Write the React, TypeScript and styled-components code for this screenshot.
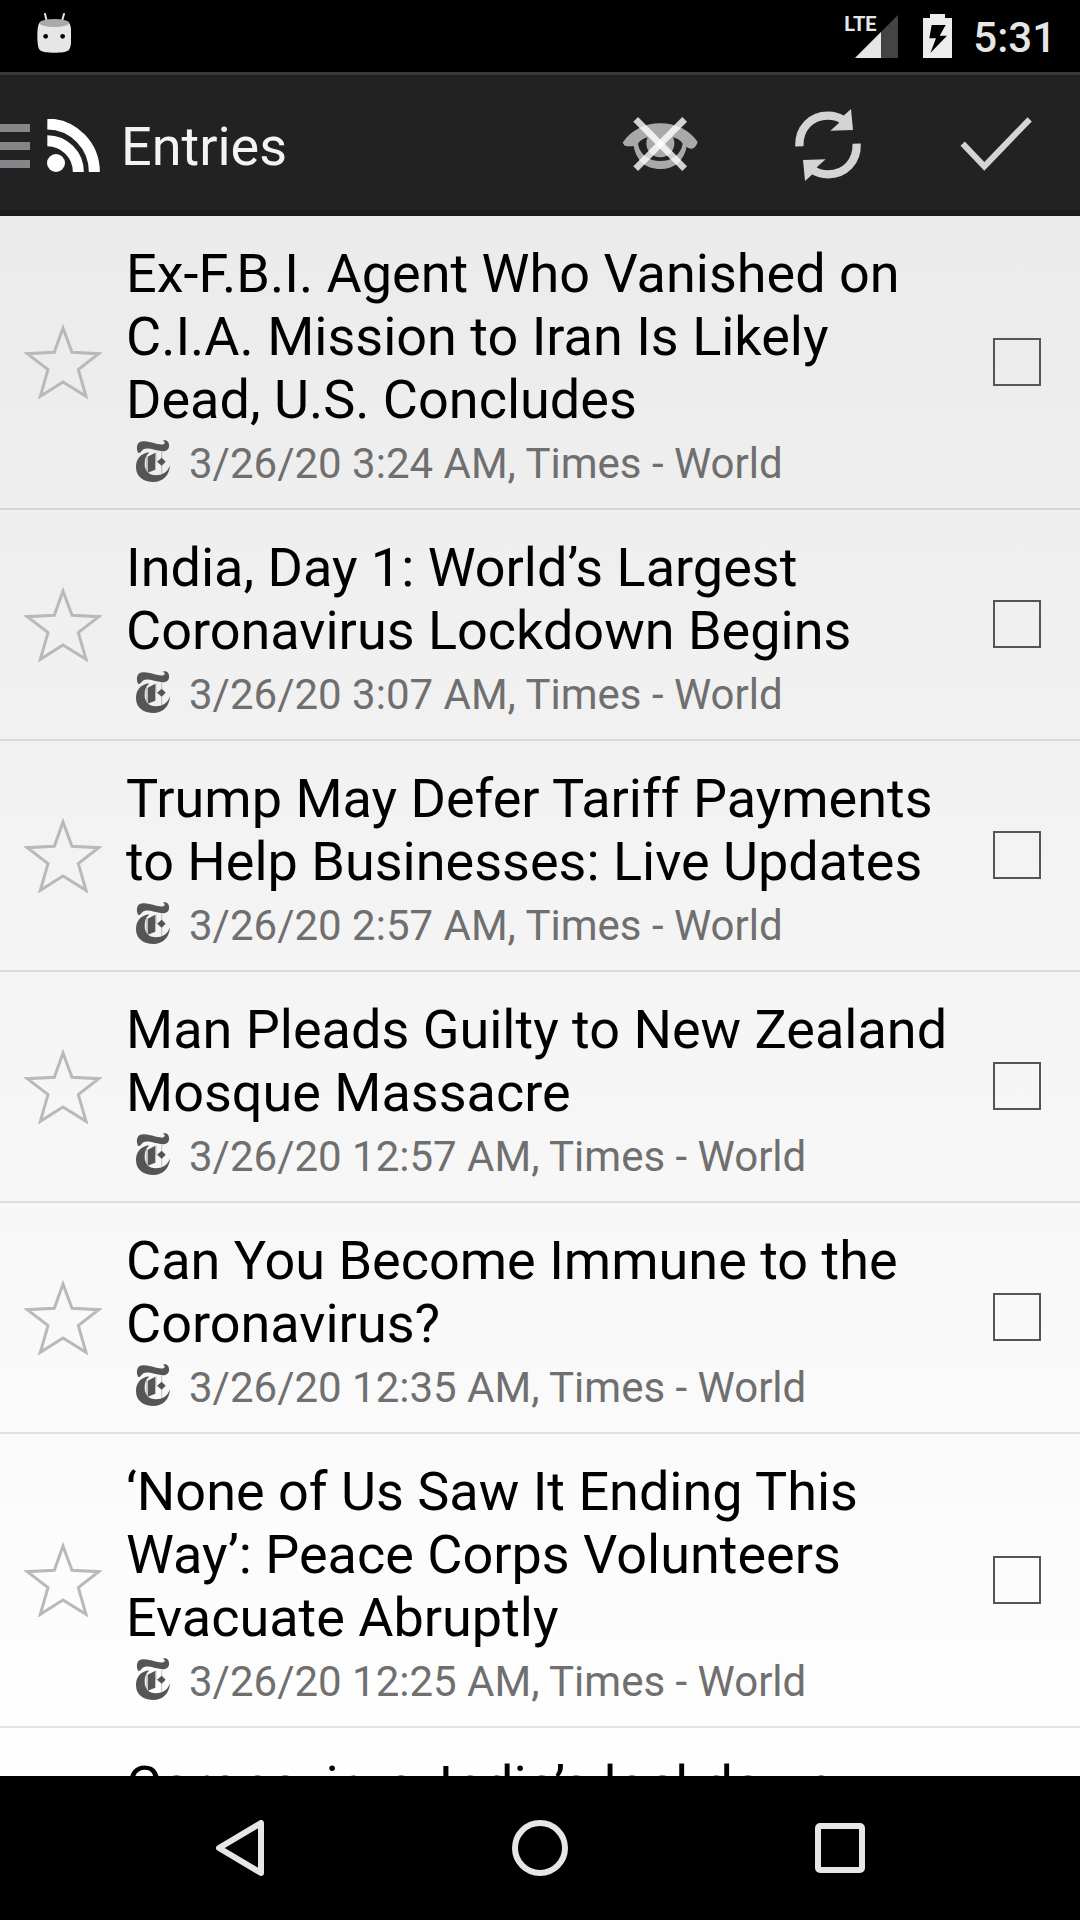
import React from "react";
import styled, { createGlobalStyle } from "styled-components";

const GlobalStyle = createGlobalStyle`
  *, *::before, *::after { box-sizing: border-box; }
  body { margin: 0; background: #000; }
  h1, h2, p, ul { margin: 0; padding: 0; font-weight: 400; }
  button { margin: 0; padding: 0; border: 0; background: none; cursor: pointer; }
  svg { display: block; }
`;

const Screen = styled.div`
  display: flex;
  flex-direction: column;
  height: 100vh;
  overflow: hidden;
  font-family: Roboto, "Noto Sans", sans-serif;
  color: #000;
  background: linear-gradient(#e8e8e8, #ffffff 94%);
`;

const StatusBar = styled.div`
  display: flex;
  flex: none;
  align-items: center;
  justify-content: space-between;
  height: 72px;
  padding: 0 24px 0 37px;
  color: #e6e6e6;
  background: #000;
`;

const StatusIcons = styled.div`
  display: flex;
  align-items: center;
  gap: 25px;
`;

const Signal = styled.div`
  position: relative;
  padding-left: 10px;
`;

const NetworkType = styled.span`
  position: absolute;
  top: -3px;
  left: -1px;
  font-size: 20px;
  font-weight: 700;
  line-height: 24px;
`;

const Clock = styled.time`
  margin-left: -4px;
  padding-top: 3px;
  font-size: 42px;
  font-weight: 500;
  line-height: 48px;
`;

const ActionBar = styled.header`
  display: flex;
  flex: none;
  align-items: center;
  height: 144px;
  background: #222;
  box-shadow: inset 0 3px #3a3a3a, inset 0 -6px #1a1a1a;
`;

const HomeButton = styled.button`
  display: flex;
  flex: none;
  align-items: center;
  gap: 17px;
  padding-top: 3px;
`;

const Title = styled.h1`
  flex: 1;
  padding: 5px 0 0 21px;
  font-size: 54px;
  line-height: 64px;
  color: #f3f3f3;
`;

const ActionButton = styled.button`
  display: flex;
  flex: none;
  align-items: center;
  justify-content: center;
  width: 168px;
  height: 100%;
`;

const EntryList = styled.ul`
  flex: 1;
  min-height: 0;
  overflow: hidden;
  list-style: none;
`;

const EntryRow = styled.li`
  display: grid;
  grid-template-columns: 126px 1fr 126px;
  align-items: center;
  border-bottom: 2px solid rgba(0, 0, 0, 0.1);
`;

const StarButton = styled.button`
  display: flex;
  justify-content: center;
  padding-bottom: 1px;
`;

const EntryText = styled.div`
  padding: 26px 0 20px;
`;

const Headline = styled.h2`
  font-size: 54px;
  line-height: 63px;
`;

const Meta = styled.p`
  display: flex;
  align-items: center;
  gap: 19px;
  padding: 8px 0 0 10px;
  font-size: 42px;
  line-height: 49px;
  color: #6f6f6f;
`;

const FeedBadge = styled.span`
  flex: none;
  padding-bottom: 5px;
`;

const ReadBox = styled.input`
  appearance: none;
  justify-self: center;
  width: 48px;
  height: 48px;
  margin: 0 0 1px;
  border: 2px solid #555;

  &:checked { background: #555; }
`;

const NavBar = styled.nav`
  display: flex;
  flex: none;
  height: 144px;
  padding: 0 90px;
  background: #000;
`;

const NavButton = styled.button`
  display: flex;
  flex: 1;
  align-items: center;
  justify-content: center;
`;

const AndroidIcon = () => (
  <svg width="34" height="46" viewBox="110 38 102 138" aria-hidden="true">
    <path d="M134 41L140 66M191 41L184 66" stroke="#e6e6e6" strokeWidth="6" strokeLinecap="round" />
    <path d="M117 68C112 76 111 90 111 108C111 128 113 144 119 150C128 160 196 160 205 150C211 144 213 128 213 108C213 90 212 76 207 68Z" fill="#e6e6e6" />
    <ellipse cx="162" cy="68" rx="45" ry="12" fill="#aaa" />
    <circle cx="136" cy="108" r="7" fill="#000" />
    <circle cx="187" cy="108" r="7" fill="#000" />
  </svg>
);

const SignalIcon = () => (
  <svg width="43" height="43" viewBox="0 0 43 43" aria-hidden="true">
    <path d="M0 43L43 0V43Z" fill="#444" />
    <path d="M0 43L26 17V43Z" fill="#e6e6e6" />
  </svg>
);

const BatteryIcon = () => (
  <svg width="29" height="44" viewBox="969 42 87 132" aria-hidden="true">
    <path fillRule="evenodd" fill="#ececec" d="M969 54H990V42H1035V54H1056V174H969ZM995 75L988 115H1008L991 159L1041 107H1019L1037 75Z" />
  </svg>
);

const DrawerIcon = () => (
  <svg width="30" height="44" viewBox="0 0 30 44" aria-hidden="true">
    <path d="M0 0H30V8H0ZM0 18H30V26H0ZM0 36H30V44H0Z" fill="#85868a" />
  </svg>
);

const FeedIcon = () => (
  <svg width="53" height="54" viewBox="141 354 159 162" aria-hidden="true">
    <circle cx="168" cy="486" r="27" fill="#fff" />
    <path d="M142 369A142 144 0 0 1 283 513M142 419A93 94 0 0 1 235 513" fill="none" stroke="#fff" strokeWidth="33" />
  </svg>
);

const HideReadIcon = () => (
  <svg width="76" height="56" viewBox="66 348 228 168" aria-hidden="true">
    <path
      fill="#a9a9a9"
      fillRule="evenodd"
      d="M68 428C92 392 132 370 181 370C230 370 270 392 293 426C290 436 283 446 275 446Q265 446 260 440C252 480 226 507 181 507C136 507 108 480 101 438Q90 440 74 437ZM114 432C120 465 147 483 181 483C215 483 242 465 248 432C242 420 230 413 212 412H150C133 413 120 420 114 432Z"
    />
    <circle cx="181" cy="430" r="42" fill="#a9a9a9" />
    <path d="M107 358L254 506" stroke="#fff" strokeOpacity="0.8" strokeWidth="20" />
    <path d="M254 358L107 506" stroke="#fff" strokeOpacity="0.8" strokeWidth="20" />
  </svg>
);

const RefreshIcon = () => (
  <svg width="68" height="76" viewBox="583 319 204 228" aria-hidden="true">
    <g id="half">
      <path d="M599 440C597 386 634 348 685 348Q712 348 734 363" fill="none" stroke="#d4d4d4" strokeWidth="25" />
      <path d="M754 328L760 391L692 393L717 371L730 350Z" fill="#d4d4d4" />
    </g>
    <use href="#half" transform="rotate(180 685 436)" />
  </svg>
);

const CheckIcon = () => (
  <svg width="72" height="56" viewBox="1080 348 216 168" aria-hidden="true">
    <path d="M1088 431L1153 499L1289 358" fill="none" stroke="#d4d4d4" strokeWidth="18" />
  </svg>
);

const StarIcon = () => (
  <svg width="78" height="75" viewBox="72 345 234 225" aria-hidden="true">
    <path d="M189 357L216 430L296 434L235 482L258 562L189 519L121 562L144 482L82 434L163 430Z" fill="none" stroke="#b9b9b9" strokeWidth="9" strokeMiterlimit="10" />
  </svg>
);

const TimesIcon = () => (
  <svg width="34" height="42" viewBox="0 0 102 126" aria-hidden="true">
    <g fill="#555">
      <path d="M8 40C1 32 0 14 10 7C22 0 40 5 56 10C68 14 84 16 86 9C87 5 83 3 80 3C83 -1 98 -1 99 14C101 28 90 35 78 34C60 32 44 24 28 26C16 28 18 36 8 40Z" />
      <path d="M38 37C12 42 0 58 0 82C0 112 24 126 52 126C80 126 100 108 102 76C94 98 78 106 60 106C38 106 26 92 26 72C26 56 30 46 38 40Z" />
      <path d="M35 50L58 38V89L35 98Z" />
      <path d="M77 53L89 65L77 77L63 65Z" />
    </g>
    <path d="M31 48V96M60 38V66M77 36V104" stroke="#555" strokeOpacity="0.5" strokeWidth="2" />
  </svg>
);

const entries = [
  { title: "Ex-F.B.I. Agent Who Vanished on C.I.A. Mission to Iran Is Likely Dead, U.S. Concludes", time: "3:24 AM" },
  { title: "India, Day 1: World’s Largest Coronavirus Lockdown Begins", time: "3:07 AM" },
  { title: "Trump May Defer Tariff Payments to Help Businesses: Live Updates", time: "2:57 AM" },
  { title: "Man Pleads Guilty to New Zealand Mosque Massacre", time: "12:57 AM" },
  { title: "Can You Become Immune to the Coronavirus?", time: "12:35 AM" },
  { title: "‘None of Us Saw It Ending This Way’: Peace Corps Volunteers Evacuate Abruptly", time: "12:25 AM" },
  { title: "Coronavirus, India’s lockdown continues", time: "12:20 AM" },
];

type EntryProps = { title: string; time: string };

const Entry = ({ title, time }: EntryProps) => (
  <EntryRow>
    <StarButton type="button" aria-label="Add to favorites">
      <StarIcon />
    </StarButton>
    <EntryText>
      <Headline>{title}</Headline>
      <Meta>
        <FeedBadge>
          <TimesIcon />
        </FeedBadge>
        <span>3/26/20 {time}, Times - World</span>
      </Meta>
    </EntryText>
    <ReadBox type="checkbox" aria-label={`Mark as read: ${title}`} />
  </EntryRow>
);

export default function App() {
  return (
    <Screen>
      <GlobalStyle />
      <StatusBar>
        <AndroidIcon />
        <StatusIcons>
          <Signal>
            <NetworkType>LTE</NetworkType>
            <SignalIcon />
          </Signal>
          <BatteryIcon />
          <Clock>5:31</Clock>
        </StatusIcons>
      </StatusBar>
      <ActionBar>
        <HomeButton type="button" aria-label="Open feeds">
          <DrawerIcon />
          <FeedIcon />
        </HomeButton>
        <Title>Entries</Title>
        <ActionButton type="button" aria-label="Hide read entries">
          <HideReadIcon />
        </ActionButton>
        <ActionButton type="button" aria-label="Refresh">
          <RefreshIcon />
        </ActionButton>
        <ActionButton type="button" aria-label="Mark all as read">
          <CheckIcon />
        </ActionButton>
      </ActionBar>
      <EntryList>
        {entries.map((entry) => (
          <Entry key={entry.title} {...entry} />
        ))}
      </EntryList>
      <NavBar>
        <NavButton type="button" aria-label="Back">
          <svg width="48" height="56" viewBox="0 0 48 56" aria-hidden="true">
            <path d="M45 3V53L3 28Z" fill="none" stroke="#e6e6e6" strokeWidth="6" strokeLinejoin="round" />
          </svg>
        </NavButton>
        <NavButton type="button" aria-label="Home">
          <svg width="56" height="56" viewBox="0 0 56 56" aria-hidden="true">
            <circle cx="28" cy="28" r="25" fill="none" stroke="#e6e6e6" strokeWidth="6" />
          </svg>
        </NavButton>
        <NavButton type="button" aria-label="Recent apps">
          <svg width="50" height="50" viewBox="0 0 50 50" aria-hidden="true">
            <rect x="3" y="3" width="44" height="44" rx="2" fill="none" stroke="#e6e6e6" strokeWidth="6" />
          </svg>
        </NavButton>
      </NavBar>
    </Screen>
  );
}
